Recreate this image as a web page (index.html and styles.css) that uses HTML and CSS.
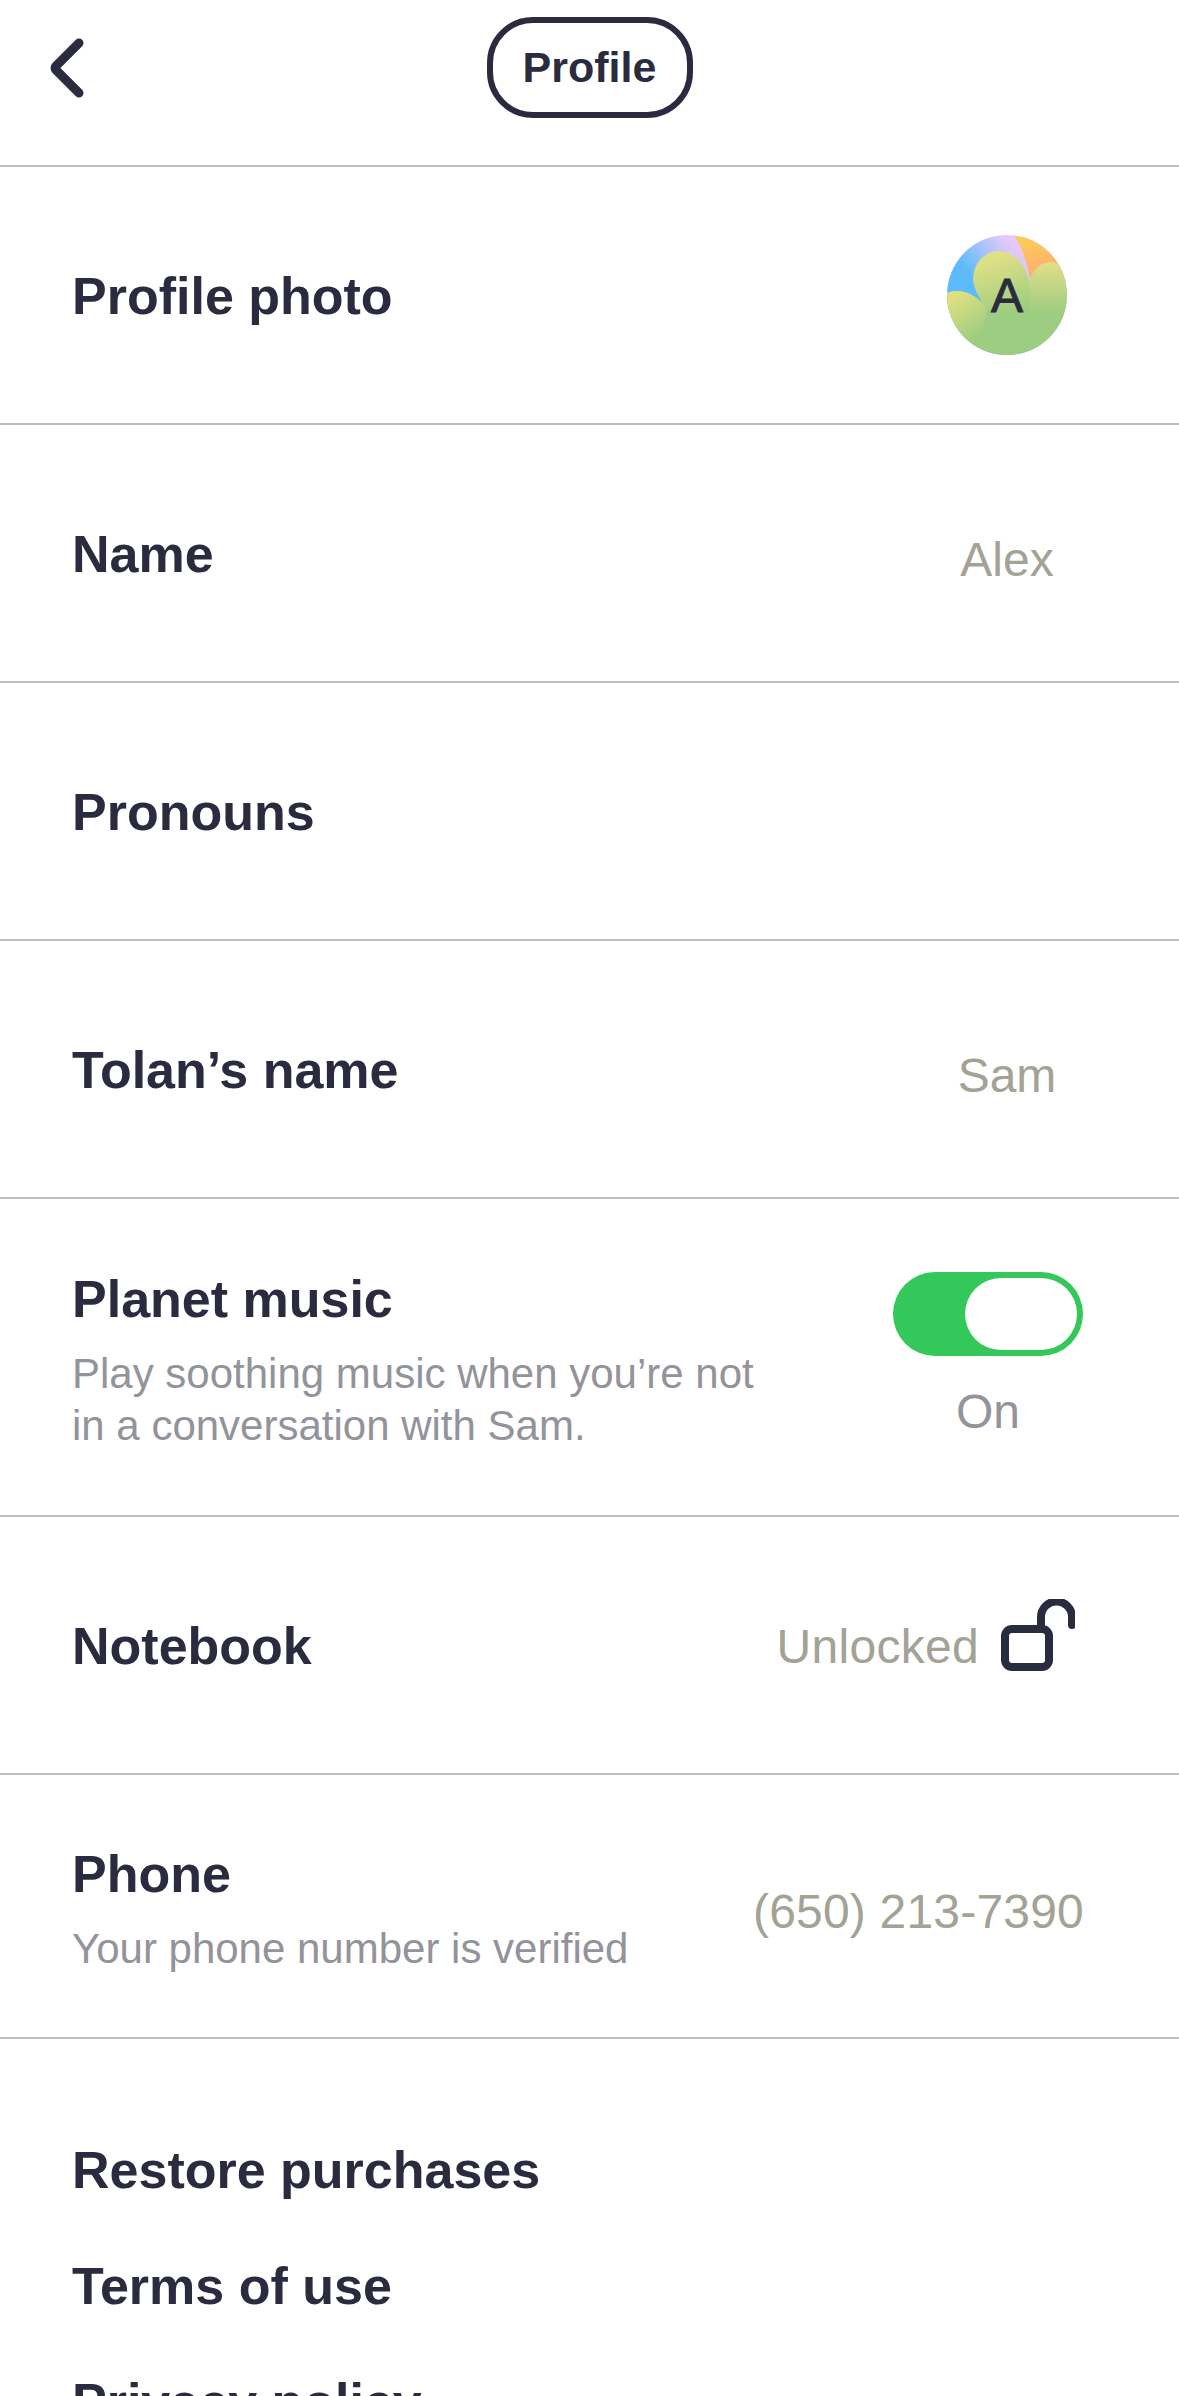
FILE: index.html
```html
<!DOCTYPE html>
<html lang="en">
<head>
<meta charset="utf-8">
<title>Profile</title>
<link rel="stylesheet" href="styles.css">
</head>
<body>
<main class="page">
  <header class="topbar">
    <svg class="back" viewBox="0 0 36 60" aria-hidden="true"><path d="M31 5 L8 28 Q6 30 8 32 L31 55" /></svg>
    <div class="pill">Profile</div>
  </header>

  <section class="row">
    <div class="label">Profile photo</div>
    <div class="avatar">
      <svg viewBox="0 0 120 120" aria-hidden="true">
        <defs>
          <clipPath id="circle"><circle cx="60" cy="60" r="60"/></clipPath>
          <linearGradient id="sky" x1="0.1" y1="0.45" x2="0.65" y2="0">
            <stop offset="0.2" stop-color="#5cbcfb"/><stop offset="0.75" stop-color="#dcc8fb"/><stop offset="1" stop-color="#f5c9f5"/>
          </linearGradient>
          <linearGradient id="sun" x1="0.2" y1="0.1" x2="0.4" y2="1">
            <stop offset="0.1" stop-color="#fdc85a"/><stop offset="0.9" stop-color="#fda876"/>
          </linearGradient>
          <linearGradient id="leaf" gradientUnits="userSpaceOnUse" x1="40" y1="20" x2="60" y2="80">
            <stop offset="0.1" stop-color="#dfdf86"/><stop offset="1" stop-color="#9ccd80"/>
          </linearGradient>
          <linearGradient id="leaf-left" gradientUnits="userSpaceOnUse" x1="10" y1="60" x2="36" y2="98">
            <stop offset="0" stop-color="#dfdf80"/><stop offset="1" stop-color="#9ccd80"/>
          </linearGradient>
          <linearGradient id="leaf-right" gradientUnits="userSpaceOnUse" x1="100" y1="28" x2="100" y2="78">
            <stop offset="0" stop-color="#e2de88"/><stop offset="1" stop-color="#9ccd80"/>
          </linearGradient>
        </defs>
        <g clip-path="url(#circle)">
          <rect width="120" height="120" fill="url(#sky)"/>
          <path d="M67 0 H120 V50 L84 48 Q78 16 67 0Z" fill="url(#sun)"/>
          <path d="M26 45 C26 28 38 16 52 16 C66 16 78 28 82 46 L88 90 H40 L34 65 Q27 54 26 45Z" fill="url(#leaf)"/>
          <path d="M82 46 C86 34 94 27 104 27 C112 27 120 34 120 40 V90 H84Z" fill="url(#leaf-right)"/>
          <path d="M0 120 V58 C14 52 32 60 40 75 L50 78 H120 V120Z" fill="#9ccd80"/>
          <path d="M0 58 C14 52 32 60 40 75 L34 110 L10 100 L0 80Z" fill="url(#leaf-left)"/>
        </g>
      </svg>
      <span class="avatar-letter">A</span>
    </div>
  </section>

  <section class="row">
    <div class="label">Name</div>
    <div class="value value-name">Alex</div>
  </section>

  <section class="row">
    <div class="label">Pronouns</div>
  </section>

  <section class="row">
    <div class="label">Tolan’s name</div>
    <div class="value value-name">Sam</div>
  </section>

  <section class="row row-music">
    <div class="text">
      <div class="label">Planet music</div>
      <div class="sub">Play soothing music when you’re not<br>in a conversation with Sam.</div>
    </div>
    <div class="switch-wrap">
      <div class="switch"><div class="knob"></div></div>
      <div class="switch-text">On</div>
    </div>
  </section>

  <section class="row">
    <div class="label">Notebook</div>
    <div class="lock">
      <span class="value">Unlocked</span>
      <svg class="lock-icon" viewBox="0 0 74 72" aria-hidden="true">
        <rect x="4" y="30" width="44" height="38" rx="7"/>
        <path d="M40 30 V18 A15.500 15.500 0 0 1 71 18 V26"/>
      </svg>
    </div>
  </section>

  <section class="row row-phone">
    <div class="text">
      <div class="label">Phone</div>
      <div class="sub">Your phone number is verified</div>
    </div>
    <div class="value value-phone">(650) 213-7390</div>
  </section>

  <nav class="links">
    <div class="label">Restore purchases</div>
    <div class="label">Terms of use</div>
    <div class="label">Privacy policy</div>
  </nav>
</main>
</body>
</html>
```

FILE: styles.css
```css
* { box-sizing: border-box; }
html, body { margin: 0; padding: 0; background: #fff; }
body { width: 1179px; height: 2396px; overflow: hidden; font-family: "Liberation Sans", Arial, sans-serif; color: #2b2b3f; }
.page { display: flex; flex-direction: column; height: 2396px; overflow: hidden; }
.topbar { height: 167px; flex: none; border-bottom: 2px solid #c0c0b6; display: flex; justify-content: center; align-items: flex-start; padding-top: 17px; position: relative; }
.back { position: absolute; left: 48px; top: 38px; width: 36px; height: 60px; }
.back path { fill: none; stroke: #2b2b3f; stroke-width: 9px; stroke-linecap: round; stroke-linejoin: round; }
.pill { width: 206px; height: 101px; border: 6px solid #2b2b3f; border-radius: 46px; display: flex; align-items: center; justify-content: center; font-size: 43px; font-weight: 700; }
.row { height: 258px; flex: none; border-bottom: 2px solid #c0c0b6; display: flex; align-items: center; justify-content: space-between; padding: 0 72px 0 72px; }
.row-music { height: 318px; }
.row-phone { height: 264px; }
.text { padding-top: 6px; }
.label { font-size: 52px; font-weight: 700; line-height: 60px; color: #2b2b3f; white-space: nowrap; padding-top: 2px; }
.text .label { padding-top: 0; }
.sub { font-size: 42px; line-height: 52px; color: #93939b; margin-top: 19px; white-space: nowrap; }
.value { font-size: 48px; color: #a3a294; line-height: 56px; white-space: nowrap; }
.value-name { width: 120px; margin-right: 40px; text-align: center; margin-top: 13px; }
.value-phone { margin-right: 23px; margin-top: 12px; letter-spacing: 0.2px; }
.lock .value { position: relative; top: 2px; letter-spacing: 0.3px; }
.avatar { position: relative; width: 120px; height: 120px; margin-right: 40px; }
.avatar svg { display: block; width: 120px; height: 120px; }
.avatar-letter { position: absolute; inset: 0; display: flex; align-items: center; justify-content: center; font-size: 48px; font-weight: 400; color: #2b2b3f; -webkit-text-stroke: 1px #2b2b3f; }
.switch-wrap { display: flex; flex-direction: column; align-items: center; margin-right: 24px; margin-top: -2px; }
.switch { width: 190px; height: 84px; border-radius: 42px; background: #34c759; position: relative; }
.knob { position: absolute; right: 6px; top: 6px; width: 112px; height: 72px; border-radius: 36px; background: #fff; }
.switch-text { font-size: 48px; line-height: 56px; color: #93939b; margin-top: 28px; }
.lock { display: flex; align-items: center; gap: 22px; margin-right: 32px; }
.lock-icon { width: 74px; height: 72px; margin-top: -20px; }
.lock-icon rect, .lock-icon path { fill: none; stroke: #2b2b3f; stroke-width: 8px; stroke-linecap: round; }
.links { display: flex; flex-direction: column; gap: 54px; padding: 99px 72px 0; }
```
